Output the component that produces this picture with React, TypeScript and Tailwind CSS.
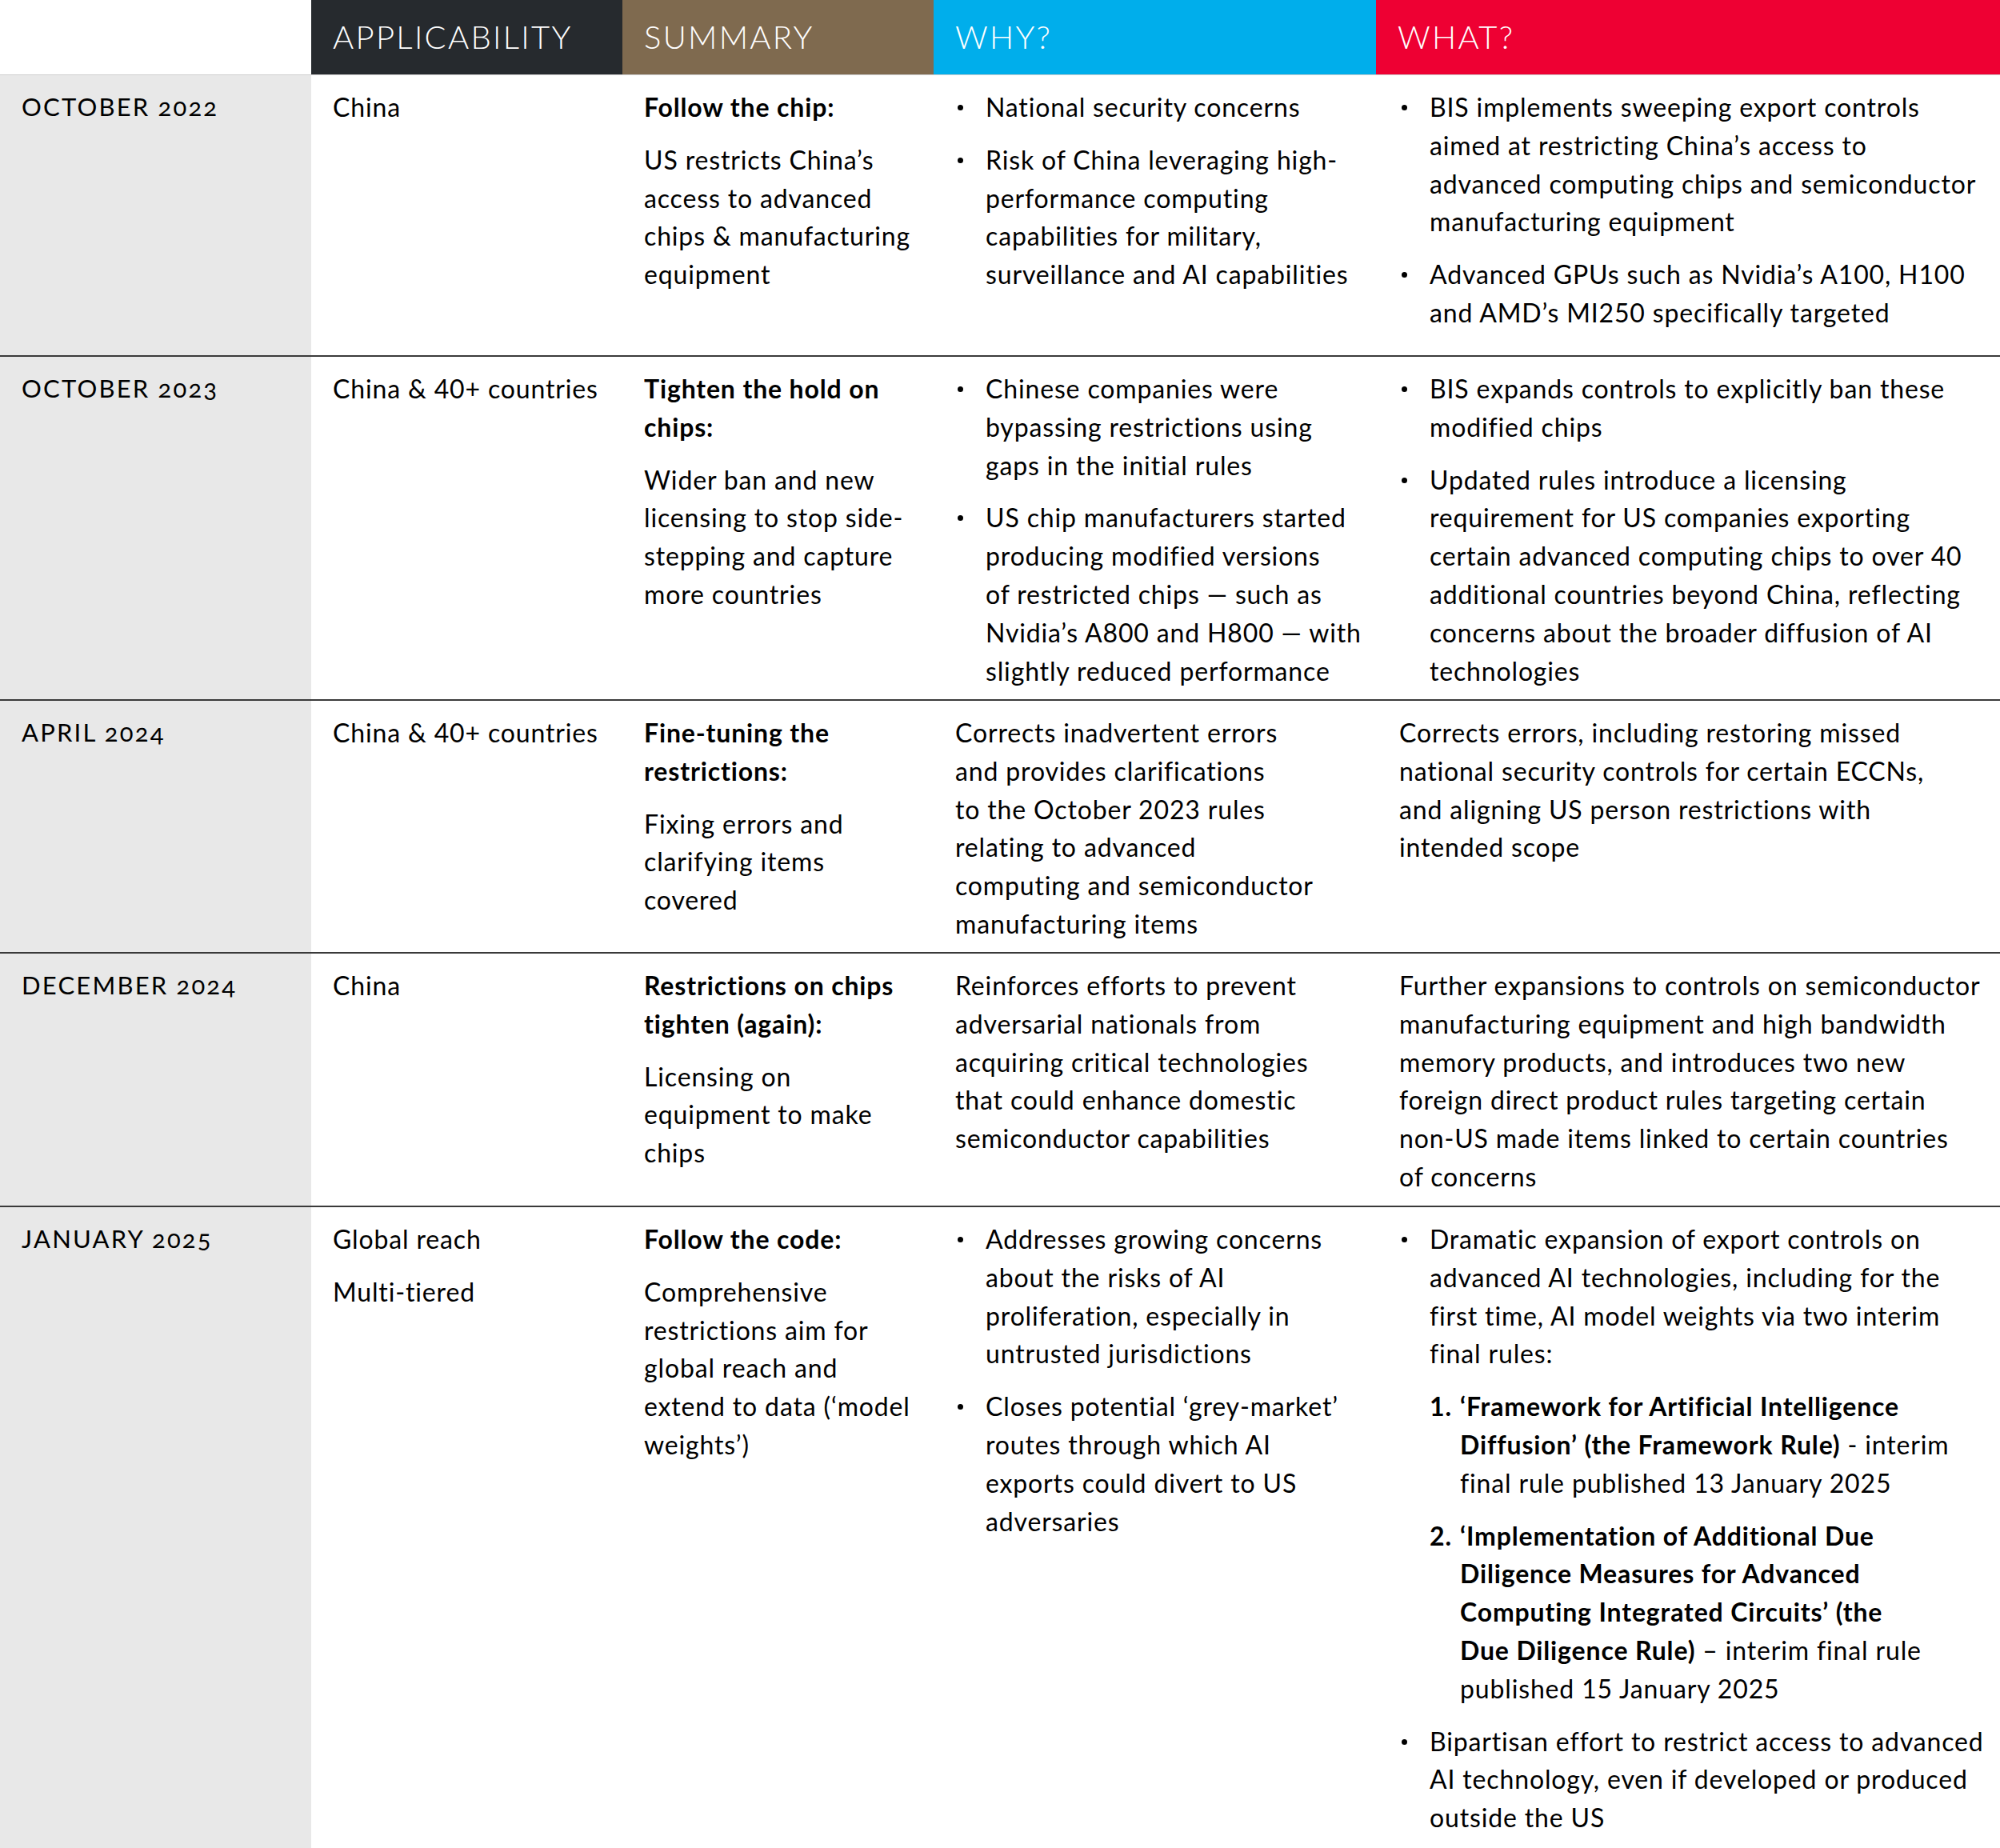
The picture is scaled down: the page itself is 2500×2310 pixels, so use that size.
import React from "react";

type N = React.ReactNode;

function L({ lines }: { lines: N[] }) {
  return (
    <>
      {lines.map((l, i) => (
        <React.Fragment key={i}>
          {i > 0 && <br />}
          {l}
        </React.Fragment>
      ))}
    </>
  );
}

function Bullet({ lines }: { lines: N[] }) {
  return (
    <div className="flex">
      <div className="w-[38px] shrink-0 pl-[3px] pt-[21px]">
        <div className="w-[7px] h-[7px] rounded-full bg-black" />
      </div>
      <div className="whitespace-nowrap">
        <L lines={lines} />
      </div>
    </div>
  );
}

function Para({ lines, bold }: { lines: N[]; bold?: boolean }) {
  return (
    <div className={"whitespace-nowrap " + (bold ? "font-bold" : "")}>
      <L lines={lines} />
    </div>
  );
}

function Num({ n, lines }: { n: string; lines: N[] }) {
  return (
    <div className="flex">
      <div className="w-[38px] shrink-0 font-bold">{n}</div>
      <div className="whitespace-nowrap">
        <L lines={lines} />
      </div>
    </div>
  );
}

function Row({
  date,
  app,
  summary,
  why,
  what,
  h,
  first,
}: {
  date: string;
  app: N;
  summary: N;
  why: N;
  what: N;
  h: string;
  first?: boolean;
}) {
  return (
    <div
      className={
        "grid grid-cols-[389px_389px_389px_553px_780px] " +
        h +
        (first ? "" : " border-t-2 border-[#3a3a3a]")
      }
    >
      <div className="bg-[#e8e8e8] pl-[27px] pt-[16px] text-[31px] oldstyle-nums tracking-[2.2px] whitespace-nowrap">
        {date}
      </div>
      <div className="pl-[27px] pt-[16px] flex flex-col gap-[18px]">{app}</div>
      <div className="pl-[27px] pt-[16px] flex flex-col gap-[18px]">{summary}</div>
      <div className="pl-[27px] pt-[16px] flex flex-col gap-[18px]">{why}</div>
      <div className="pl-[29px] pt-[16px] flex flex-col gap-[18px]">{what}</div>
    </div>
  );
}

export default function App() {
  return (
    <div className="w-[2500px] h-[2310px] bg-white text-black font-['Lato',sans-serif] text-[32px] tracking-[0.85px] leading-[47.8px] overflow-hidden">
      <div className="grid grid-cols-[389px_389px_389px_553px_780px] h-[94px] border-b border-[#cfcfcf]">
        <div className="bg-white" />
        <div className="bg-[#262a2e] text-white flex items-center pl-[27px] text-[40px] font-light tracking-[2.3px]">
          APPLICABILITY
        </div>
        <div className="bg-[#7f6a4f] text-white flex items-center pl-[27px] text-[40px] font-light tracking-[2.3px]">
          SUMMARY
        </div>
        <div className="bg-[#00aeeb] text-white flex items-center pl-[27px] text-[40px] font-light tracking-[2.3px]">
          WHY?
        </div>
        <div className="bg-[#ee0033] text-white flex items-center pl-[27px] text-[40px] font-light tracking-[2.3px]">
          WHAT?
        </div>
      </div>

      <Row
        first
        h="h-[350px]"
        date="OCTOBER 2022"
        app={<Para lines={["China"]} />}
        summary={
          <>
            <Para bold lines={["Follow the chip:"]} />
            <Para lines={["US restricts China’s", "access to advanced", "chips & manufacturing", "equipment"]} />
          </>
        }
        why={
          <>
            <Bullet lines={["National security concerns"]} />
            <Bullet
              lines={[
                "Risk of China leveraging high-",
                "performance computing",
                "capabilities for military,",
                "surveillance and AI capabilities",
              ]}
            />
          </>
        }
        what={
          <>
            <Bullet
              lines={[
                "BIS implements sweeping export controls",
                "aimed at restricting China’s access to",
                "advanced computing chips and semiconductor",
                "manufacturing equipment",
              ]}
            />
            <Bullet lines={["Advanced GPUs such as Nvidia’s A100, H100", "and AMD’s MI250 specifically targeted"]} />
          </>
        }
      />

      <Row
        h="h-[430px]"
        date="OCTOBER 2023"
        app={<Para lines={["China & 40+ countries"]} />}
        summary={
          <>
            <Para bold lines={["Tighten the hold on", "chips:"]} />
            <Para lines={["Wider ban and new", "licensing to stop side-", "stepping and capture", "more countries"]} />
          </>
        }
        why={
          <>
            <Bullet lines={["Chinese companies were", "bypassing restrictions using", "gaps in the initial rules"]} />
            <Bullet
              lines={[
                "US chip manufacturers started",
                "producing modified versions",
                "of restricted chips — such as",
                "Nvidia’s A800 and H800 — with",
                "slightly reduced performance",
              ]}
            />
          </>
        }
        what={
          <>
            <Bullet lines={["BIS expands controls to explicitly ban these", "modified chips"]} />
            <Bullet
              lines={[
                "Updated rules introduce a licensing",
                "requirement for US companies exporting",
                "certain advanced computing chips to over 40",
                "additional countries beyond China, reflecting",
                "concerns about the broader diffusion of AI",
                "technologies",
              ]}
            />
          </>
        }
      />

      <Row
        h="h-[316px]"
        date="APRIL 2024"
        app={<Para lines={["China & 40+ countries"]} />}
        summary={
          <>
            <Para bold lines={["Fine-tuning the", "restrictions:"]} />
            <Para lines={["Fixing errors and", "clarifying items", "covered"]} />
          </>
        }
        why={
          <Para
            lines={[
              "Corrects inadvertent errors",
              "and provides clarifications",
              "to the October 2023 rules",
              "relating to advanced",
              "computing and semiconductor",
              "manufacturing items",
            ]}
          />
        }
        what={
          <Para
            lines={[
              "Corrects errors, including restoring missed",
              "national security controls for certain ECCNs,",
              "and aligning US person restrictions with",
              "intended scope",
            ]}
          />
        }
      />

      <Row
        h="h-[317px]"
        date="DECEMBER 2024"
        app={<Para lines={["China"]} />}
        summary={
          <>
            <Para bold lines={["Restrictions on chips", "tighten (again):"]} />
            <Para lines={["Licensing on", "equipment to make", "chips"]} />
          </>
        }
        why={
          <Para
            lines={[
              "Reinforces efforts to prevent",
              "adversarial nationals from",
              "acquiring critical technologies",
              "that could enhance domestic",
              "semiconductor capabilities",
            ]}
          />
        }
        what={
          <Para
            lines={[
              "Further expansions to controls on semiconductor",
              "manufacturing equipment and high bandwidth",
              "memory products, and introduces two new",
              "foreign direct product rules targeting certain",
              "non-US made items linked to certain countries",
              "of concerns",
            ]}
          />
        }
      />

      <Row
        h="h-[803px]"
        date="JANUARY 2025"
        app={
          <>
            <Para lines={["Global reach"]} />
            <Para lines={["Multi-tiered"]} />
          </>
        }
        summary={
          <>
            <Para bold lines={["Follow the code:"]} />
            <Para
              lines={["Comprehensive", "restrictions aim for", "global reach and", "extend to data (‘model", "weights’)"]}
            />
          </>
        }
        why={
          <>
            <Bullet
              lines={[
                "Addresses growing concerns",
                "about the risks of AI",
                "proliferation, especially in",
                "untrusted jurisdictions",
              ]}
            />
            <Bullet
              lines={["Closes potential ‘grey-market’", "routes through which AI", "exports could divert to US", "adversaries"]}
            />
          </>
        }
        what={
          <>
            <Bullet
              lines={[
                "Dramatic expansion of export controls on",
                "advanced AI technologies, including for the",
                "first time, AI model weights via two interim",
                "final rules:",
              ]}
            />
            <div className="pl-[38px] flex flex-col gap-[18px]">
              <Num
                n="1."
                lines={[
                  <b key="a">‘Framework for Artificial Intelligence</b>,
                  <>
                    <b>Diffusion’ (the Framework Rule)</b> - interim
                  </>,
                  "final rule published 13 January 2025",
                ]}
              />
              <Num
                n="2."
                lines={[
                  <b key="b">‘Implementation of Additional Due</b>,
                  <b key="c">Diligence Measures for Advanced</b>,
                  <b key="d">Computing Integrated Circuits’ (the</b>,
                  <>
                    <b>Due Diligence Rule)</b> – interim final rule
                  </>,
                  "published 15 January 2025",
                ]}
              />
            </div>
            <Bullet
              lines={[
                "Bipartisan effort to restrict access to advanced",
                "AI technology, even if developed or produced",
                "outside the US",
              ]}
            />
          </>
        }
      />
    </div>
  );
}
